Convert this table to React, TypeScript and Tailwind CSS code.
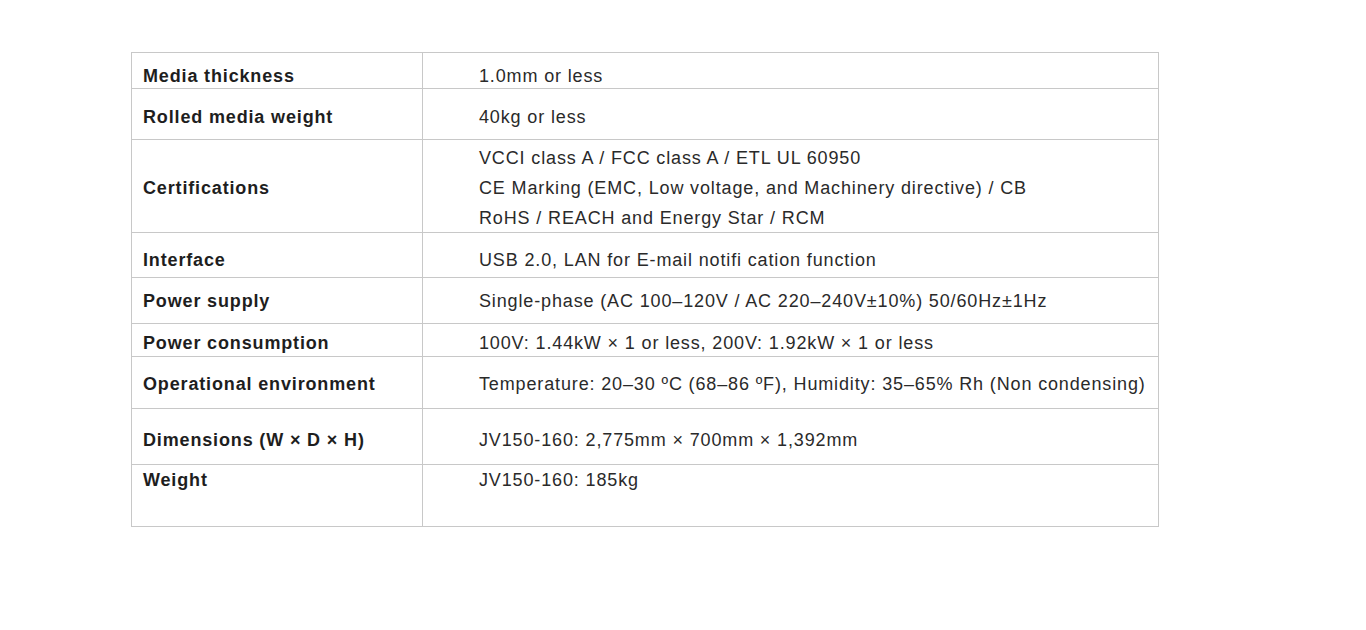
import React from "react";

type Row = { label: string; value: string[]; h: string; pt: string; lpt?: string };

const rows: Row[] = [
  { label: "Media thickness", value: ["1.0mm or less"], h: "h-[36px]", pt: "pt-[8px]" },
  { label: "Rolled media weight", value: ["40kg or less"], h: "h-[51px]", pt: "pt-[13px]" },
  {
    label: "Certifications",
    value: [
      "VCCI class A / FCC class A / ETL UL 60950",
      "CE Marking (EMC, Low voltage, and Machinery directive) / CB",
      "RoHS / REACH and Energy Star / RCM",
    ],
    h: "h-[93px]",
    pt: "pt-[3px]",
    lpt: "pt-[33px]",
  },
  { label: "Interface", value: ["USB 2.0, LAN for E-mail notifi cation function"], h: "h-[45px]", pt: "pt-[12px]" },
  { label: "Power supply", value: ["Single-phase (AC 100\u2013120V / AC 220\u2013240V\u00b110%) 50/60Hz\u00b11Hz"], h: "h-[46px]", pt: "pt-[8px]" },
  { label: "Power consumption", value: ["100V: 1.44kW \u00d7 1 or less, 200V: 1.92kW \u00d7 1 or less"], h: "h-[33px]", pt: "pt-[4px]" },
  { label: "Operational environment", value: ["Temperature: 20\u201330 \u00baC (68\u201386 \u00baF), Humidity: 35\u201365% Rh (Non condensing)"], h: "h-[52px]", pt: "pt-[12px]" },
  { label: "Dimensions (W \u00d7 D \u00d7 H)", value: ["JV150-160: 2,775mm \u00d7 700mm \u00d7 1,392mm"], h: "h-[56px]", pt: "pt-[16px]" },
  { label: "Weight", value: ["JV150-160: 185kg"], h: "h-[62px]", pt: "pt-[0px]" },
];

export default function App() {
  return (
    <div className="min-h-[630px] w-[1366px] bg-white pt-[52px] pl-[131px] font-['Liberation_Sans',Arial,sans-serif]">
      <div className="w-[1028px] border-t border-l border-r border-[#c8c8c8]">
        {rows.map((r, i) => (
          <div
            key={i}
            className={`grid grid-cols-[291px_1fr] border-b border-[#c8c8c8] overflow-hidden ${r.h}`}
          >
            <div className={`border-r border-[#c8c8c8] pl-[11px] text-[18px] leading-[30px] font-bold tracking-[0.85px] text-[#1e1e1e] ${r.lpt ?? r.pt}`}>
              {r.label}
            </div>
            <div className={`pl-[56px] text-[18px] leading-[30px] tracking-[0.86px] text-[#2a2a2a] ${r.pt}`}>
              {r.value.map((v, j) => (
                <div key={j} className="whitespace-nowrap">{v}</div>
              ))}
            </div>
          </div>
        ))}
      </div>
    </div>
  );
}
